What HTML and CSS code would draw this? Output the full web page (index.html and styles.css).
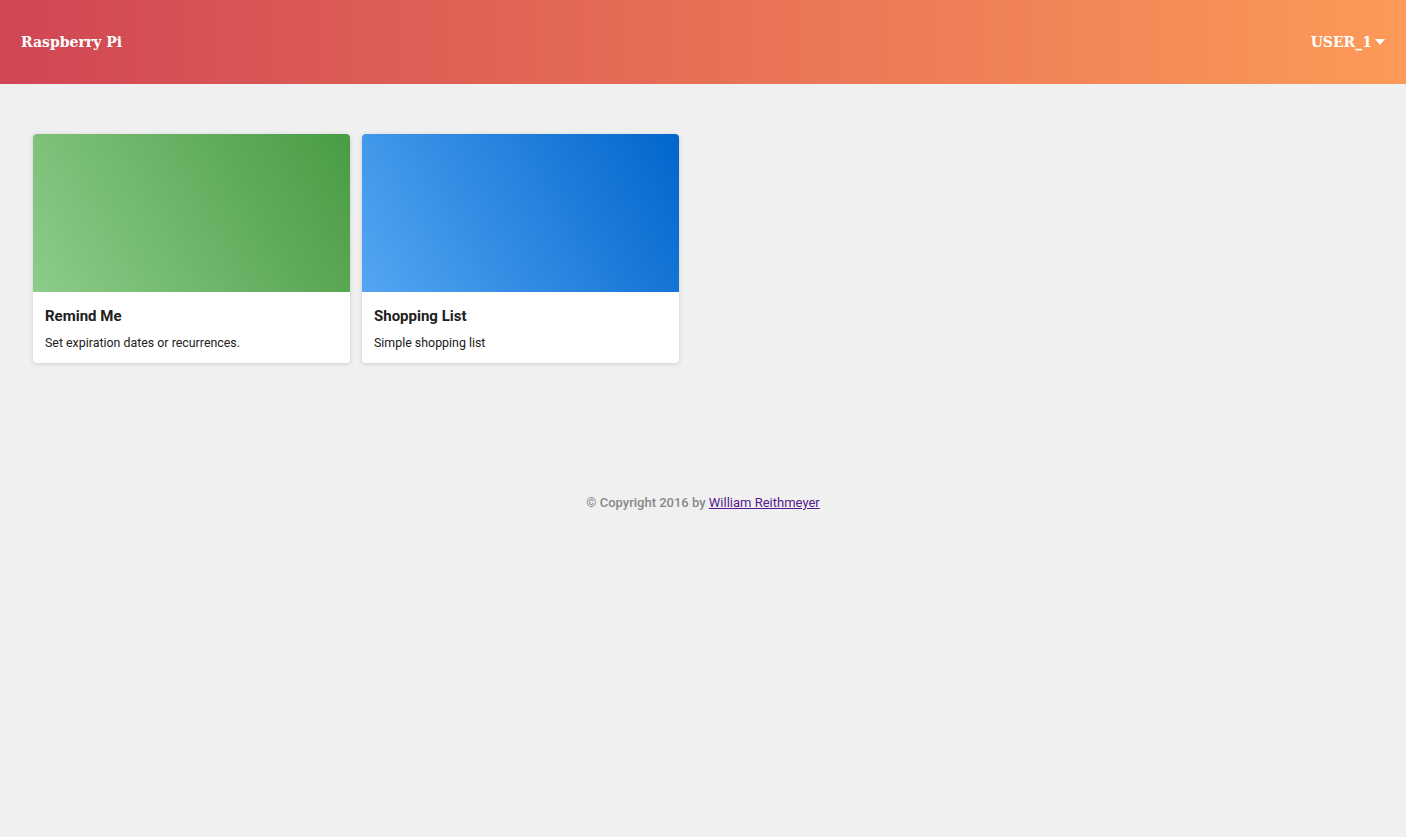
FILE: index.html
```html
<!DOCTYPE html>
<html>
<head>
<meta charset="utf-8">
<title>Raspberry Pi</title>
<link rel="stylesheet" href="styles.css">
</head>
<body>
<header class="topbar">
  <div class="brand">Raspberry Pi</div>
  <div class="user">USER_1<span class="caret"></span></div>
</header>
<main class="content">
  <div class="cards">
    <div class="card">
      <div class="card-img green"></div>
      <div class="card-body">
        <div class="card-title">Remind Me</div>
        <div class="card-text">Set expiration dates or recurrences.</div>
      </div>
    </div>
    <div class="card">
      <div class="card-img blue"></div>
      <div class="card-body">
        <div class="card-title">Shopping List</div>
        <div class="card-text">Simple shopping list</div>
      </div>
    </div>
  </div>
</main>
<footer class="footer">© Copyright 2016 by <a href="#" class="author">William Reithmeyer</a></footer>
</body>
</html>
```
FILE: styles.css
```css
html, body { margin: 0; padding: 0; }
body {
  background: #f0f0f0;
  font-family: Roboto, "Liberation Sans", sans-serif;
  color: #212121;
  min-height: 837px;
}
.topbar {
  height: 84px;
  display: flex;
  align-items: center;
  justify-content: space-between;
  padding: 0 21px;
  background: linear-gradient(to right, #d04654, #fd9a58);
  color: #fff;
  font-family: "DejaVu Serif", serif;
  font-weight: bold;
}
.brand { font-size: 14px; }
.user { font-size: 14px; display: flex; align-items: center; }
.caret {
  width: 0; height: 0;
  border-left: 5px solid transparent;
  border-right: 5px solid transparent;
  border-top: 6px solid #fff;
  margin-left: 3px;
}
.content { padding: 50px 33px 0; }
.cards { display: flex; gap: 12px; }
.card {
  width: 317px;
  background: #fff;
  border-radius: 4px;
  overflow: hidden;
  box-shadow: 0 1px 5px rgba(0,0,0,0.14);
}
.card-img { height: 158px; }
.green { background: linear-gradient(60deg, #8dcc8a, #4a9b44); }
.blue { background: linear-gradient(60deg, #55a6f3, #0066cc); }
.card-body { padding: 15px 12px 12px; }
.card-title { font-size: 15px; font-weight: bold; line-height: 18px; color: #212121; }
.card-text { font-size: 12.4px; line-height: 16px; margin-top: 10px; color: #212121; }
.footer {
  text-align: center;
  font-size: 13px;
  font-weight: 500;
  color: #888;
  margin-top: 132px;
}
.author { color: #551a8b; font-weight: 400; }
```
